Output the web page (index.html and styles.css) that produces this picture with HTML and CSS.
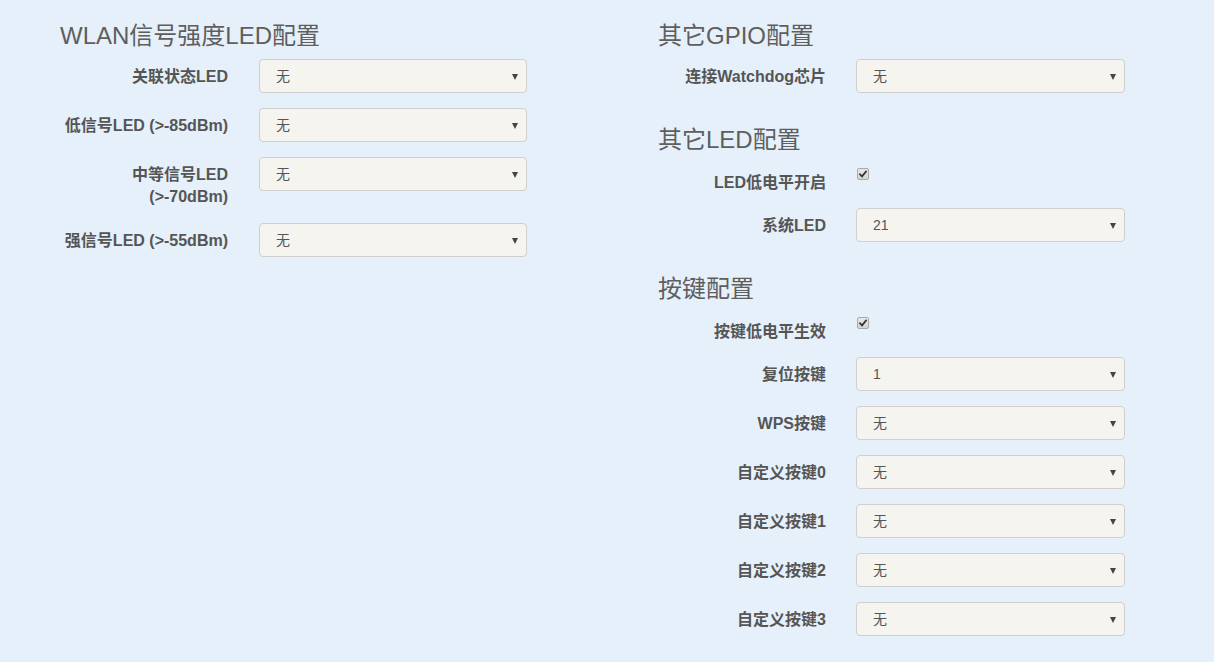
FILE: index.html
```html
<!DOCTYPE html>
<html lang="zh-CN">
<head>
<meta charset="utf-8">
<title>GPIO配置</title>
<link rel="stylesheet" href="styles.css">
</head>
<body>
<div class="page">
  <div class="col">
    <section class="group">
      <h3 class="legend">WLAN信号强度LED配置</h3>
      <div class="row">
        <label class="lbl">关联状态LED</label>
        <div class="sel"><span class="val">无</span></div>
      </div>
      <div class="row">
        <label class="lbl">低信号LED (&gt;-85dBm)</label>
        <div class="sel"><span class="val">无</span></div>
      </div>
      <div class="row">
        <label class="lbl lbl-two">中等信号LED<br>(&gt;-70dBm)</label>
        <div class="sel"><span class="val">无</span></div>
      </div>
      <div class="row">
        <label class="lbl">强信号LED (&gt;-55dBm)</label>
        <div class="sel"><span class="val">无</span></div>
      </div>
    </section>
  </div>
  <div class="col col-right">
    <section class="group">
      <h3 class="legend">其它GPIO配置</h3>
      <div class="row">
        <label class="lbl">连接Watchdog芯片</label>
        <div class="sel"><span class="val">无</span></div>
      </div>
    </section>
    <section class="group">
      <h3 class="legend">其它LED配置</h3>
      <div class="row row-check">
        <label class="lbl lbl-check">LED低电平开启</label>
        <div class="chk-cell"><span class="chk"><svg viewBox="0 0 10 10" width="8" height="8"><path d="M1.2 5.4 L3.8 8 L8.8 2" fill="none" stroke="#333" stroke-width="2.2" stroke-linecap="square"/></svg></span></div>
      </div>
      <div class="row">
        <label class="lbl">系统LED</label>
        <div class="sel"><span class="val">21</span></div>
      </div>
    </section>
    <section class="group">
      <h3 class="legend">按键配置</h3>
      <div class="row row-check">
        <label class="lbl lbl-check">按键低电平生效</label>
        <div class="chk-cell"><span class="chk"><svg viewBox="0 0 10 10" width="8" height="8"><path d="M1.2 5.4 L3.8 8 L8.8 2" fill="none" stroke="#333" stroke-width="2.2" stroke-linecap="square"/></svg></span></div>
      </div>
      <div class="row">
        <label class="lbl">复位按键</label>
        <div class="sel"><span class="val">1</span></div>
      </div>
      <div class="row">
        <label class="lbl">WPS按键</label>
        <div class="sel"><span class="val">无</span></div>
      </div>
      <div class="row">
        <label class="lbl">自定义按键0</label>
        <div class="sel"><span class="val">无</span></div>
      </div>
      <div class="row">
        <label class="lbl">自定义按键1</label>
        <div class="sel"><span class="val">无</span></div>
      </div>
      <div class="row">
        <label class="lbl">自定义按键2</label>
        <div class="sel"><span class="val">无</span></div>
      </div>
      <div class="row">
        <label class="lbl">自定义按键3</label>
        <div class="sel"><span class="val">无</span></div>
      </div>
    </section>
  </div>
</div>
</body>
</html>
```

FILE: styles.css
```css
html, body {
  margin: 0;
  padding: 0;
}
body {
  background: #e5f0fa;
  font-family: "Liberation Sans", Arial, "Noto Sans CJK SC", sans-serif;
  color: #555;
  height: 662px;
  overflow: hidden;
}
.page {
  display: flex;
  padding: 22px 0 0 60px;
}
.col {
  width: 598px;
  flex: none;
  display: flex;
  flex-direction: column;
  gap: 18px;
}
.legend {
  margin: 0 0 9px 0;
  font-size: 24px;
  line-height: 28px;
  font-weight: 400;
  color: #5e5e5e;
}
.row {
  display: grid;
  grid-template-columns: 168px 268px;
  column-gap: 31px;
  margin-bottom: 15px;
}
.col-right .row {
  grid-template-columns: 168px 269px;
  column-gap: 30px;
}
.lbl {
  text-align: right;
  font-size: 16px;
  font-weight: 700;
  line-height: 22px;
  padding-top: 7px;
  color: #555;
}
.row-check {
  height: 30px;
}
.lbl-check {
  padding-top: 9px;
}
.chk-cell {
  padding-top: 5px;
  padding-left: 1px;
}
.chk {
  width: 12px;
  height: 12px;
  box-sizing: border-box;
  border: 1px solid #a9a9a9;
  border-radius: 2px;
  background: linear-gradient(#e8e8e8, #d4d4d4);
  display: flex;
  align-items: center;
  justify-content: center;
}
.sel {
  position: relative;
  height: 34px;
  box-sizing: border-box;
  border: 1px solid #cfcfcf;
  border-radius: 4px;
  background: #f6f4ef;
  display: flex;
  align-items: center;
  padding-left: 16px;
  font-size: 14px;
  color: #555;
}
.sel::after {
  content: "";
  position: absolute;
  right: 8px;
  top: 14px;
  border-left: 3px solid transparent;
  border-right: 3px solid transparent;
  border-top: 6px solid #444;
}
.val {
  line-height: 20px;
}
```
